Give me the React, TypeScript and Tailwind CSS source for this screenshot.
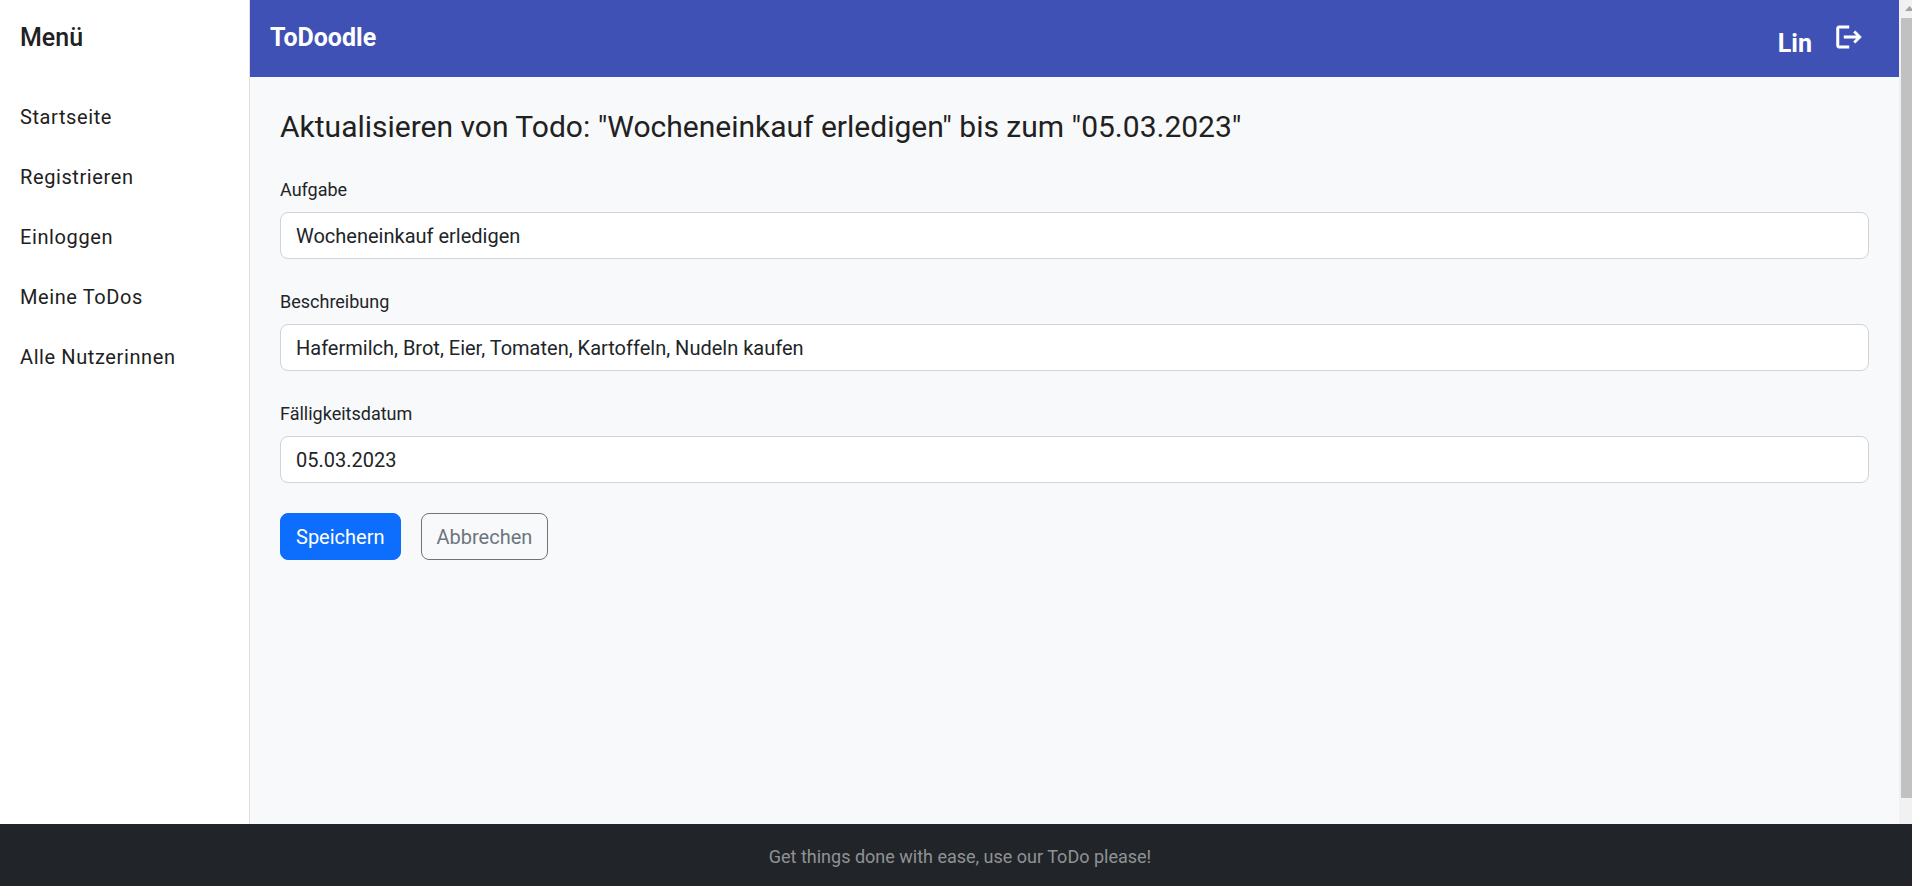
const navItems = ["Startseite", "Registrieren", "Einloggen", "Meine ToDos", "Alle Nutzerinnen"];

const fields = [
  { id: "task", label: "Aufgabe", value: "Wocheneinkauf erledigen" },
  { id: "description", label: "Beschreibung", value: "Hafermilch, Brot, Eier, Tomaten, Kartoffeln, Nudeln kaufen" },
  { id: "due-date", label: "Fälligkeitsdatum", value: "05.03.2023" },
];

function LogoutIcon() {
  return (
    <svg viewBox="0 0 24 24" className="size-[30px]" fill="currentColor" stroke="currentColor" strokeWidth="0.4" aria-hidden="true">
      <path d="M17 7l-1.41 1.41L18.17 11H8v2h10.17l-2.58 2.58L17 17l5-5zM4 5h8V3H4c-1.1 0-2 .9-2 2v14c0 1.1.9 2 2 2h8v-2H4V5z" />
    </svg>
  );
}

function Sidebar() {
  return (
    <aside className="w-[250px] shrink-0 border-r border-[#e0e0e0] bg-white text-[#212121]">
      <h2 className="flex h-[76px] items-center px-5 text-[25px] font-medium">Menü</h2>
      <nav className="pt-[11px]">
        {navItems.map((item) => (
          <a key={item} href="#" className="flex h-[60px] items-center px-5 text-xl tracking-[0.03em]">
            {item}
          </a>
        ))}
      </nav>
    </aside>
  );
}

function Header() {
  return (
    <header className="flex h-[77px] items-center bg-[#3f51b5] pr-4 pl-5 text-white">
      <h1 className="flex-1 pb-0.5 text-[25px] font-bold">ToDoodle</h1>
      <span className="pt-2.5 text-[25px] font-bold">Lin</span>
      <button type="button" aria-label="Abmelden" className="mr-3 ml-3.5 flex h-12 w-[45px] items-center justify-center pb-1">
        <LogoutIcon />
      </button>
    </header>
  );
}

function TodoForm() {
  return (
    <form className="p-[30px]">
      <h2 className="text-[30px] leading-10 text-[#212121]">
        Aktualisieren von Todo: "Wocheneinkauf erledigen" bis zum "05.03.2023"
      </h2>
      <div className="mt-[30px] flex flex-col gap-[30px]">
        {fields.map((field) => (
          <div key={field.id}>
            <label htmlFor={field.id} className="block pb-[9px] text-lg leading-[26px]">
              {field.label}
            </label>
            <input
              id={field.id}
              type="text"
              defaultValue={field.value}
              className="block h-[47px] w-full rounded-lg border border-[#ced4da] bg-white px-[15px] text-xl"
            />
          </div>
        ))}
      </div>
      <div className="mt-[30px] flex gap-5">
        <button type="submit" className="h-[47px] rounded-lg border border-[#0d6efd] bg-[#0d6efd] px-[15px] text-xl text-white">
          Speichern
        </button>
        <button type="button" className="h-[47px] rounded-lg border border-[#6c757d] px-[15px] text-xl text-[#6c757d]">
          Abbrechen
        </button>
      </div>
    </form>
  );
}

function ScrollTrack() {
  return (
    <div aria-hidden="true" className="flex w-[13px] shrink-0 flex-col bg-[#f1f1f1] pb-[26px] pl-[2px]">
      <svg viewBox="0 0 11 18" className="h-[18px] w-[11px] shrink-0">
        <path d="M4 11 L8.500 6 L13 11 Z" fill="#a3a3a3" />
      </svg>
      <div className="flex-1 bg-[#c1c1c1]" />
    </div>
  );
}

export default function App() {
  return (
    <div className="flex min-h-screen flex-col bg-[#f8f9fa] font-['Roboto',sans-serif] text-[#212529]">
      <div className="flex flex-1">
        <Sidebar />
        <main className="min-w-0 flex-1">
          <Header />
          <TodoForm />
        </main>
        <ScrollTrack />
      </div>
      <footer className="flex h-[62px] items-center justify-center bg-[#212529] pt-1 pl-2 text-lg text-[#909294]">
        Get things done with ease, use our ToDo please!
      </footer>
    </div>
  );
}
